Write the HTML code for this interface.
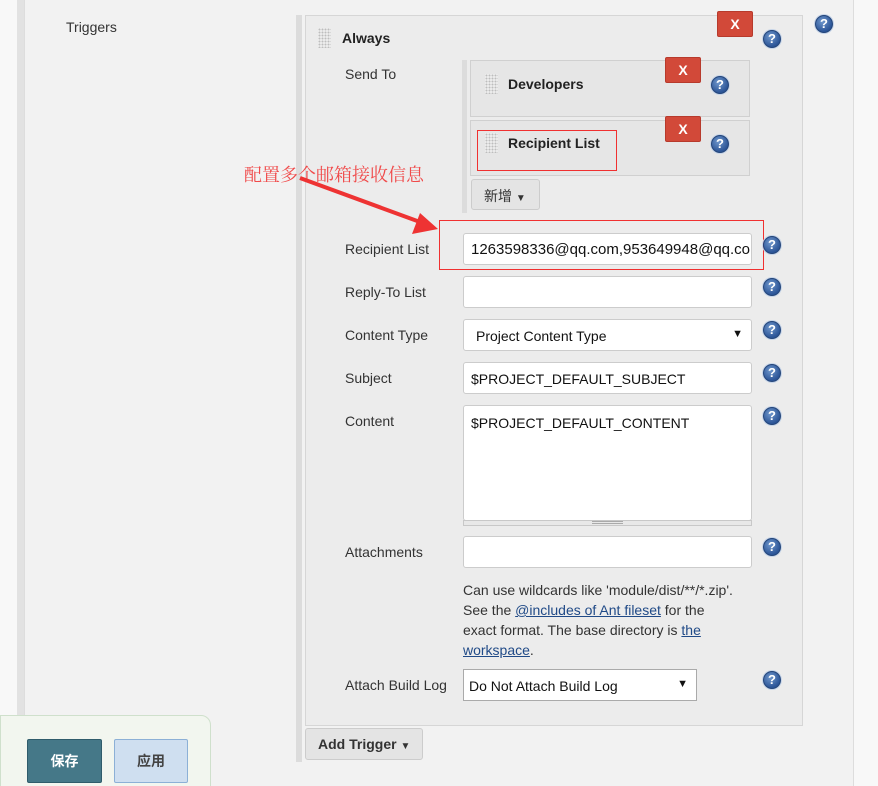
<!DOCTYPE html>
<html><head><meta charset="utf-8"><style>
*{margin:0;padding:0;box-sizing:border-box}
html,body{width:878px;height:786px;overflow:hidden}
body{background:#f8f8f8;font-family:"Liberation Sans","Noto Sans CJK SC",sans-serif;font-size:14px;color:#333;position:relative}
.a{position:absolute}
.lbl{position:absolute;font-size:14px;color:#333}
.inp{position:absolute;background:#fff;border:1px solid #ccc;border-radius:3px;height:32px;font-size:14px;padding:8px 7px;color:#111;white-space:nowrap;overflow:hidden}
.help{position:absolute;width:18px;height:18px;border-radius:50%;background:radial-gradient(circle at 40% 35%,#6f97cc,#2c5597 70%);border:1px solid #23457a;box-shadow:0 0 0 1px #c6d4e8;color:#fff;font:bold 13px/16px "Liberation Sans",sans-serif;text-align:center}
.x{position:absolute;width:36px;height:26px;background:#d24939;border:1px solid #b73a2c;border-radius:2px;color:#fff;font:bold 14px/24px "Liberation Sans",sans-serif;text-align:center}
.grip{position:absolute;width:13px;height:20px;background-image:radial-gradient(#bdbdbd 1px,transparent 1.3px);background-size:3px 3px;background-color:#f6f6f6}
.bold{position:absolute;font-weight:bold;font-size:14px;color:#222}
.btn{position:absolute;background:#e4e4e4;border:1px solid #ccc;border-radius:3px;font-weight:bold;color:#333;font-size:14px;white-space:nowrap}
a{color:#204a87;text-decoration:underline}
</style></head><body>
<div class="a" style="left:17px;top:0;width:7px;height:786px;background:#e2e2e2"></div>
<div class="a" style="left:24px;top:0;width:830px;height:786px;background:#f2f2f2;border-left:1px solid #ddd;border-right:1px solid #ddd"></div>
<div class="lbl" style="left:66px;top:19px">Triggers</div>
<div class="a" style="left:296px;top:15px;width:6px;height:747px;background:#dcdcdc"></div>
<div class="a" style="left:305px;top:15px;width:498px;height:711px;background:#ececec;border:1px solid #d6d6d6"></div>
<div class="grip" style="left:318px;top:28px"></div>
<div class="bold" style="left:342px;top:30px">Always</div>
<div class="x" style="left:717px;top:11px">X</div>
<div class="help" style="left:763px;top:30px">?</div>
<div class="help" style="left:815px;top:15px">?</div>
<div class="lbl" style="left:345px;top:66px">Send To</div>
<div class="a" style="left:462px;top:60px;width:5px;height:153px;background:#dcdcdc"></div>
<div class="a" style="left:470px;top:60px;width:280px;height:57px;background:#e6e6e6;border:1px solid #d0d0d0"></div>
<div class="grip" style="left:485px;top:74px"></div>
<div class="bold" style="left:508px;top:76px">Developers</div>
<div class="x" style="left:665px;top:57px">X</div>
<div class="help" style="left:711px;top:76px">?</div>
<div class="a" style="left:470px;top:120px;width:280px;height:56px;background:#e6e6e6;border:1px solid #d0d0d0"></div>
<div class="a" style="left:477px;top:130px;width:140px;height:41px;border:1px solid #f03030"></div>
<div class="grip" style="left:485px;top:133px"></div>
<div class="bold" style="left:508px;top:135px">Recipient List</div>
<div class="x" style="left:665px;top:116px">X</div>
<div class="help" style="left:711px;top:135px">?</div>
<div class="btn" style="left:471px;top:179px;width:69px;height:31px;padding:6px 12px;font-weight:normal">新增 <span style="font-size:10px">▼</span></div>
<div class="a" style="left:244px;top:161px;color:#f04a4a;font-family:'Noto Serif CJK SC','Liberation Serif',serif;font-size:18px">配置多个邮箱接收信息</div>
<svg class="a" style="left:0;top:0" width="878" height="786"><line x1="300" y1="178" x2="420" y2="222" stroke="#ee3333" stroke-width="4"/><polygon points="438,229 412,234 420,213" fill="#ee3333"/></svg>
<div class="a" style="left:439px;top:220px;width:325px;height:50px;border:1px solid #f03030"></div>
<div class="lbl" style="left:345px;top:241px">Recipient List</div>
<div class="inp" style="left:463px;top:233px;width:289px;font-size:15px;padding-top:7px">1263598336@qq.com,953649948@qq.com</div>
<div class="help" style="left:763px;top:236px">?</div>
<div class="lbl" style="left:345px;top:284px">Reply-To List</div>
<div class="inp" style="left:463px;top:276px;width:289px"></div>
<div class="help" style="left:763px;top:278px">?</div>
<div class="lbl" style="left:345px;top:327px">Content Type</div>
<div class="inp" style="left:463px;top:319px;width:289px;padding-left:12px">Project Content Type<span style="position:absolute;right:8px;top:8px;font-size:11px">▼</span></div>
<div class="help" style="left:763px;top:321px">?</div>
<div class="lbl" style="left:345px;top:370px">Subject</div>
<div class="inp" style="left:463px;top:362px;width:289px">$PROJECT_DEFAULT_SUBJECT</div>
<div class="help" style="left:763px;top:364px">?</div>
<div class="lbl" style="left:345px;top:413px">Content</div>
<div class="inp" style="left:463px;top:405px;width:289px;height:116px;padding-top:9px">$PROJECT_DEFAULT_CONTENT</div>
<div class="a" style="left:463px;top:520px;width:289px;height:6px;background:#e8e8e8;border:1px solid #c8c8c8"></div>
<div class="a" style="left:592px;top:521px;width:31px;height:3px;border-top:1px solid #aaa;border-bottom:1px solid #aaa"></div>
<div class="help" style="left:763px;top:407px">?</div>
<div class="lbl" style="left:345px;top:544px">Attachments</div>
<div class="inp" style="left:463px;top:536px;width:289px"></div>
<div class="help" style="left:763px;top:538px">?</div>
<div class="a" style="left:463px;top:580px;width:300px;line-height:20px;font-size:14px;color:#333;white-space:nowrap">Can use wildcards like 'module/dist/**/*.zip'.<br>See the <a>@includes of Ant fileset</a> for the<br>exact format. The base directory is <a>the</a><br><a>workspace</a>.</div>
<div class="lbl" style="left:345px;top:677px">Attach Build Log</div>
<div class="inp" style="left:463px;top:669px;width:234px;border-color:#aaa;border-radius:0;padding-left:5px">Do Not Attach Build Log<span style="position:absolute;right:8px;top:8px;font-size:11px">▼</span></div>
<div class="help" style="left:763px;top:671px">?</div>
<div class="btn" style="left:305px;top:728px;width:118px;height:32px;padding:7px 12px">Add Trigger <span style="font-size:10px">▼</span></div>
<div class="a" style="left:0;top:715px;width:211px;height:80px;background:#f2f6ef;border:1px solid #cfe0cc;border-radius:0 10px 0 0"></div>
<div class="a" style="left:27px;top:739px;width:75px;height:44px;background:#457888;border:1px solid #2f5c6b;border-radius:2px;color:#fff;font-weight:bold;text-align:center;line-height:42px">保存</div>
<div class="a" style="left:114px;top:739px;width:74px;height:44px;background:#cfdff0;border:1px solid #8cb0d6;border-radius:2px;color:#444;font-weight:bold;text-align:center;line-height:42px">应用</div>
</body></html>
